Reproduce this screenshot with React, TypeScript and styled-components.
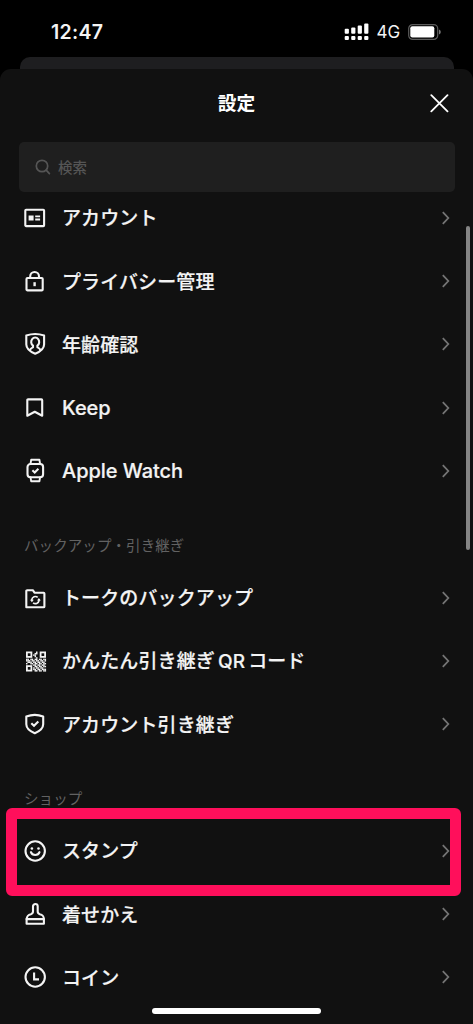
import React from "react";
import styled, { createGlobalStyle } from "styled-components";

const GlobalStyle = createGlobalStyle`
  * { box-sizing: border-box; }
  html, body { margin: 0; background: #000; }
  body { overflow: hidden; }
`;

const Screen = styled.div`
  width: 473px;
  height: 1024px;
  display: flex;
  flex-direction: column;
  position: relative;
  overflow: hidden;
  background: #000;
  color: #f4f4f4;
  font-family: Inter, "Noto Sans CJK JP", sans-serif;
`;

const StatusBar = styled.header`
  height: 57px;
  flex: none;
  display: flex;
  align-items: center;
  justify-content: space-between;
  padding: 7px 32px 0 51px;
`;

const Clock = styled.span`
  font-size: 19.5px;
  font-weight: 600;
  line-height: 24px;
  letter-spacing: 0.3px;
`;

const StatusIcons = styled.div`
  display: flex;
  align-items: center;
`;

const Network = styled.span`
  font-size: 17px;
  line-height: 24px;
  margin: 0 8px 0 7px;
  letter-spacing: -0.1px;
`;

const BackCard = styled.div`
  height: 12px;
  flex: none;
  margin: 0 19.5px 0 20px;
  background: #1e1e20;
  border-radius: 10px 10px 0 0;
`;

const Sheet = styled.main`
  flex: 1;
  min-height: 0;
  display: flex;
  flex-direction: column;
  background: #111;
  border-radius: 11px 11px 0 0;
`;

const TitleBar = styled.div`
  height: 73px;
  flex: none;
  display: grid;
  grid-template-columns: 1fr auto 1fr;
  align-items: center;
  padding: 0 24px 4px;
`;

const Title = styled.h1`
  grid-column: 2;
  margin: 0;
  padding-top: 1px;
  font-size: 18.7px;
  font-weight: 700;
  line-height: 28px;
  color: #fff;
`;

const CloseButton = styled.button`
  justify-self: end;
  display: flex;
  padding: 0;
  border: 0;
  background: none;
  color: #fff;
`;

const SearchField = styled.div`
  height: 50px;
  flex: none;
  display: flex;
  align-items: center;
  gap: 7px;
  margin: 0 18.5px 0 19px;
  padding-left: 16px;
  border-radius: 5px;
  background: #1f1f1f;
  color: #555;
  font-size: 14.5px;
  font-weight: 500;
`;

const SearchHint = styled.span`
  padding-bottom: 2px;
`;

const List = styled.div`
  margin-top: -5.9px;
`;

const Row = styled.div`
  height: 63.3px;
  display: flex;
  align-items: center;
  padding: 0 23.5px 0 23px;
`;

const Label = styled.span<{ $latin?: boolean }>`
  flex: 1;
  margin-left: 15px;
  padding-top: ${(p) => (p.$latin ? 0 : 3)}px;
  font-size: ${(p) => (p.$latin ? 20 : 19)}px;
  letter-spacing: ${(p) => (p.$latin ? -0.05 : 0.12)}px;
  font-weight: 500;
  -webkit-text-stroke: 0.2px currentColor;
  line-height: 28px;
  white-space: nowrap;
`;

const Latin = styled.span`
  margin: 0 3px;
`;

const SectionTitle = styled.h2`
  height: 63.3px;
  margin: 0;
  padding: 32px 0 0 24px;
  font-size: 14.5px;
  font-weight: 400;
  line-height: 22px;
  letter-spacing: 0.08px;
  color: #626262;
`;

const Scrollbar = styled.div`
  position: absolute;
  right: 3.5px;
  top: 226px;
  width: 4px;
  height: 324px;
  border-radius: 2px;
  background: #858585;
`;

const Highlight = styled.div`
  position: absolute;
  left: 6px;
  top: 808px;
  width: 455px;
  height: 87.5px;
  border: 11px solid #ff0f5b;
  border-radius: 6px;
`;

const HomeIndicator = styled.div`
  position: absolute;
  left: 152px;
  top: 1008px;
  width: 169px;
  height: 6px;
  border-radius: 3px;
  background: #fff;
`;

const Glyph = ({ children }: { children: React.ReactNode }) => (
  <svg width="24" height="24" viewBox="0 0 24 24" fill="none" stroke="currentColor" strokeWidth="2.1" strokeLinejoin="round" strokeLinecap="round" overflow="visible">
    {children}
  </svg>
);

/* Data modules of the QR icon; the three finder squares are drawn apart. */
const QR_MODULES = [
  "......01......",
  "......11......",
  ".....110......",
  ".....010......",
  ".....001......",
  "11011011011011",
  "11101101101101",
  "01110110110110",
  "10011011011011",
  ".....110110110",
  ".....011011011",
  ".....101101100",
  ".....110110111",
  ".....011011011",
];

const icons = {
  account: (
    <Glyph>
      <rect x="2.3" y="3.7" width="18.8" height="16.4" rx="0.8" />
      <path d="M5.6 9.4h5v5h-5zM12.2 9.4h4.9v1.9h-4.9zM12.2 12.5h4.9v1.9h-4.9z" fill="currentColor" stroke="none" />
    </Glyph>
  ),
  lock: (
    <Glyph>
      <rect x="3.5" y="9" width="16.2" height="12.4" rx="1" />
      <path d="M7.2 9V7.4a4.4 4.4 0 0 1 8.8 0V9" />
      <path d="M11.6 13.2v4" strokeWidth="2.4" strokeLinecap="butt" />
    </Glyph>
  ),
  age: (
    <Glyph>
      <path d="M3.3 3.5Q7.8 2 12.2 2T21.1 3.5V12.6C21.1 17 16.8 19.9 12.2 21.8C7.6 19.9 3.3 17 3.3 12.6Z" />
      <path d="M7 18.2C7.2 16.5 8.4 16 10 15.2V13.6A4 4.4 0 1 1 14.4 13.6V15.2C16 16 17.2 16.5 17.4 18.2" />
    </Glyph>
  ),
  keep: (
    <Glyph>
      <path d="M4.3 4.2Q4.3 3.4 5.1 3.4H18.4Q19.2 3.4 19.2 4.2V19.7L11.75 15.7L4.3 19.7Z" />
    </Glyph>
  ),
  watch: (
    <Glyph>
      <rect x="4.5" y="5" width="15.6" height="13.2" rx="3" />
      <path d="M7.5 5L8.2 0.7H16.4L17.1 5M7.5 18.2L8.2 22.3H16.4L17.1 18.2" strokeWidth="1.9" />
      <path d="M9.4 11.3L11.7 13.5L15.4 9.8" strokeLinecap="butt" strokeLinejoin="miter" />
    </Glyph>
  ),
  folder: (
    <Glyph>
      <path d="M3.3 21.2V5.1Q3.3 4.2 4.2 4.2H9.8L11.5 6.7H20.6Q21.4 6.7 21.4 7.5V20.4Q21.4 21.2 20.6 21.2Z" />
      <path d="M8.8 14.8V13.7A3.6 3.6 0 0 1 14.7 11.4M16 13.2V14.6A3.6 3.6 0 0 1 10.1 16.8" strokeWidth="1.7" strokeLinecap="butt" />
      <path d="M7 13.8h3.8l-1.9 2.4zM14 14.4h3.8l-1.9-2.4z" fill="currentColor" stroke="none" />
    </Glyph>
  ),
  qr: (
    <Glyph>
      <g fill="currentColor" stroke="none" transform="translate(3 2.5) scale(1.43)">
        {QR_MODULES.flatMap((row, y) =>
          [...row].map((cell, x) => (cell === "1" ? <rect key={`${x}-${y}`} x={x} y={y} width="1.05" height="1.05" /> : null)),
        )}
      </g>
      <g strokeWidth="1.8" strokeLinejoin="miter">
        <rect x="3.9" y="3.4" width="4.5" height="4.5" />
        <rect x="17.6" y="3.4" width="4.5" height="4.5" />
        <rect x="3.9" y="17.1" width="4.5" height="4.5" />
      </g>
    </Glyph>
  ),
  transfer: (
    <Glyph>
      <path d="M3.3 4.5Q7.6 2.9 11.8 2.9T20.2 4.5V12.2C20.2 16.7 16 19.4 11.8 21.2C7.6 19.4 3.3 16.7 3.3 12.2Z" />
      <path d="M8.3 11.2L11 13.8L15.3 9.5" strokeLinecap="butt" strokeLinejoin="miter" />
    </Glyph>
  ),
  smile: (
    <Glyph>
      <circle cx="12.2" cy="12" r="9.7" />
      <path d="M7.9 13.2A4.5 4 0 0 0 16.5 13.2" />
      <circle cx="8.9" cy="9.5" r="1.3" fill="currentColor" stroke="none" />
      <circle cx="15.5" cy="9.5" r="1.3" fill="currentColor" stroke="none" />
    </Glyph>
  ),
  brush: (
    <Glyph>
      <path d="M3.6 17.1C4 13.5 5.3 12.8 7.9 12.2Q10 11.6 10 9.6V4.3A2.35 2.35 0 0 1 14.7 4.3V9.6Q14.7 11.6 16.8 12.2C19.4 12.8 20.7 13.5 20.9 17.1V21.8H3.6Z" />
      <path d="M3.6 17.1H20.8" />
    </Glyph>
  ),
  coin: (
    <Glyph>
      <circle cx="12.2" cy="12" r="9.7" />
      <path d="M11.1 7.4V14.4H16" strokeLinecap="butt" strokeLinejoin="miter" />
    </Glyph>
  ),
};

const Chevron = () => (
  <svg width="8" height="14" viewBox="0 0 8 14" fill="none" stroke="#747474" strokeWidth="1.8">
    <path d="M0.8 1.2L6.3 7L0.8 12.8" />
  </svg>
);

type ItemProps = { icon: keyof typeof icons; latin?: boolean; children: React.ReactNode };

const Item = ({ icon, latin, children }: ItemProps) => (
  <Row>
    {icons[icon]}
    <Label $latin={latin}>{children}</Label>
    <Chevron />
  </Row>
);

const Signal = () => (
  <svg width="26" height="18" viewBox="0 0 26 18" fill="#fff">
    {[0, 1, 2, 3].map((i) => (
      <g key={i}>
        <rect x={0.7 + i * 6.5} y={[5.8, 4.5, 2.5, 0.5][i]} width="4.2" height={[5, 6.3, 8.3, 10.3][i]} rx="1" />
        <rect x={0.7 + i * 6.5} y="13" width="4.2" height="4.1" rx="1" />
      </g>
    ))}
  </svg>
);

const Battery = () => (
  <svg width="33" height="17" viewBox="0 0 33 17" fill="none">
    <rect x="0.7" y="0.6" width="29" height="14.8" rx="4" stroke="#5c5c5c" strokeWidth="1.2" />
    <rect x="2.3" y="2.2" width="24" height="11.4" rx="2" fill="#fff" />
    <path d="M31 5.4Q32.8 6.2 32.8 8T31 10.6Z" fill="#777" />
  </svg>
);

export default function App() {
  return (
    <Screen>
      <GlobalStyle />
      <StatusBar>
        <Clock>12:47</Clock>
        <StatusIcons>
          <Signal />
          <Network>4G</Network>
          <Battery />
        </StatusIcons>
      </StatusBar>
      <BackCard />
      <Sheet>
        <TitleBar>
          <Title>設定</Title>
          <CloseButton aria-label="閉じる">
            <svg width="19" height="19" viewBox="0 0 19 19" fill="none" stroke="currentColor" strokeWidth="1.8" strokeLinecap="round">
              <path d="M1.3 1.2L17.5 17.4M17.5 1.2L1.3 17.4" />
            </svg>
          </CloseButton>
        </TitleBar>
        <SearchField>
          <svg width="16" height="16" viewBox="0 0 16 16" fill="none" stroke="currentColor" strokeWidth="1.7" strokeLinecap="round">
            <circle cx="7" cy="7" r="5.7" />
            <path d="M11.2 11.2L14.4 14.6" />
          </svg>
          <SearchHint>検索</SearchHint>
        </SearchField>
        <List>
          <Item icon="account">アカウント</Item>
          <Item icon="lock">プライバシー管理</Item>
          <Item icon="age">年齢確認</Item>
          <Item icon="keep" latin>Keep</Item>
          <Item icon="watch" latin>Apple Watch</Item>
          <SectionTitle>バックアップ・引き継ぎ</SectionTitle>
          <Item icon="folder">トークのバックアップ</Item>
          <Item icon="qr">かんたん引き継ぎ<Latin>QR</Latin>コード</Item>
          <Item icon="transfer">アカウント引き継ぎ</Item>
          <SectionTitle>ショップ</SectionTitle>
          <Item icon="smile">スタンプ</Item>
          <Item icon="brush">着せかえ</Item>
          <Item icon="coin">コイン</Item>
        </List>
      </Sheet>
      <Scrollbar />
      <Highlight />
      <HomeIndicator />
    </Screen>
  );
}
